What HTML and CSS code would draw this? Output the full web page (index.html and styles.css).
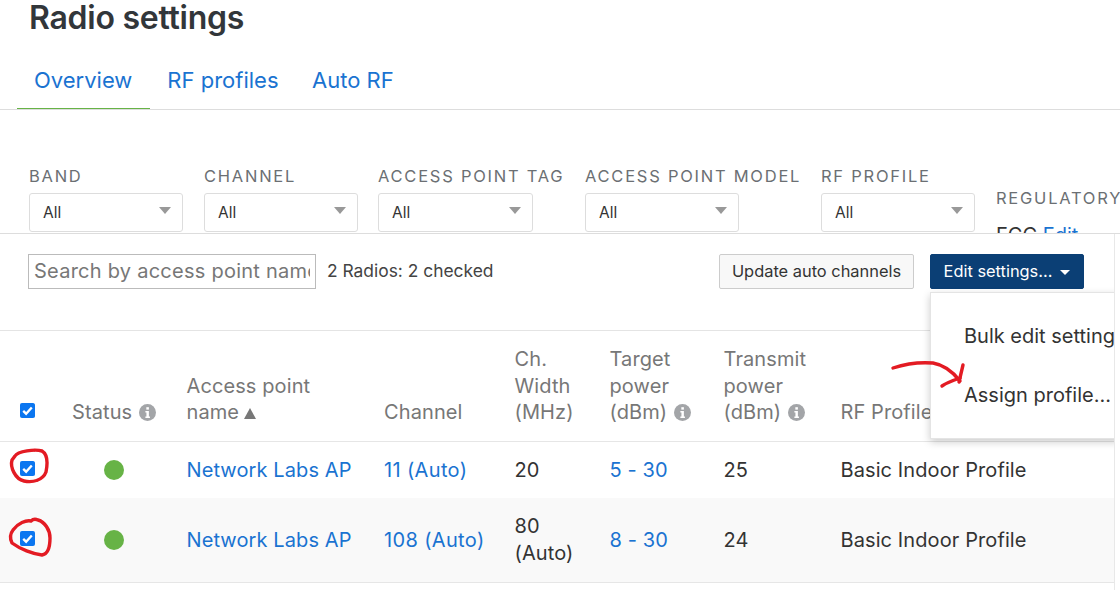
FILE: index.html
```html
<!DOCTYPE html>
<html lang="en">
<head>
<meta charset="utf-8">
<title>Radio settings</title>
<link rel="stylesheet" href="styles.css">
</head>
<body>
<div class="page">
  <h1 class="title">Radio settings</h1>
  <nav class="tabs">
    <a class="tab active">Overview</a>
    <a class="tab">RF profiles</a>
    <a class="tab">Auto RF</a>
  </nav>
  <section class="filters">
    <div class="filter f1"><label>BAND</label><div class="select">All<i></i></div></div>
    <div class="filter f2"><label>CHANNEL</label><div class="select">All<i></i></div></div>
    <div class="filter f3"><label>ACCESS POINT TAG</label><div class="select">All<i></i></div></div>
    <div class="filter f4"><label>ACCESS POINT MODEL</label><div class="select">All<i></i></div></div>
    <div class="filter f5"><label>RF PROFILE</label><div class="select">All<i></i></div></div>
    <div class="regulatory"><label>REGULATORY DOMAIN</label><p>FCC <a>Edit</a></p></div>
  </section>
  <section class="toolbar">
    <input class="search" type="text" placeholder="Search by access point name">
    <span class="count">2 Radios: 2 checked</span>
    <button class="btn">Update auto channels</button>
    <button class="btn primary">Edit settings...<i></i></button>
  </section>
  <table class="radios">
    <thead>
      <tr>
        <th class="c-check"><span class="check"><svg viewBox="0 0 14 14"><path d="M3 7.4l2.7 2.6L11 4.2"/></svg></span></th>
        <th class="c-status">Status <svg class="info" viewBox="0 0 16 16"><circle cx="8" cy="8" r="8"/><rect x="6.9" y="3" width="2.4" height="2.3"/><path d="M6 6.6h3.3v5.2h1v1.4H6v-1.4h1V8H6z"/></svg></th>
        <th class="c-name">Access point name<span class="sort"></span></th>
        <th class="c-channel">Channel</th>
        <th class="c-width">Ch. Width (MHz)</th>
        <th class="c-target">Target power (dBm) <svg class="info" viewBox="0 0 16 16"><circle cx="8" cy="8" r="8"/><rect x="6.9" y="3" width="2.4" height="2.3"/><path d="M6 6.6h3.3v5.2h1v1.4H6v-1.4h1V8H6z"/></svg></th>
        <th class="c-power">Transmit power (dBm) <svg class="info" viewBox="0 0 16 16"><circle cx="8" cy="8" r="8"/><rect x="6.9" y="3" width="2.4" height="2.3"/><path d="M6 6.6h3.3v5.2h1v1.4H6v-1.4h1V8H6z"/></svg></th>
        <th class="c-profile">RF Profile</th>
      </tr>
    </thead>
    <tbody>
      <tr class="row-a">
        <td class="c-check"><span class="check"><svg viewBox="0 0 14 14"><path d="M3 7.4l2.7 2.6L11 4.2"/></svg></span></td>
        <td class="c-status"><span class="dot"></span></td>
        <td><a>Network Labs AP</a></td>
        <td class="c-channel"><a>11 (Auto)</a></td>
        <td>20</td>
        <td><a>5 - 30</a></td>
        <td>25</td>
        <td>Basic Indoor Profile</td>
      </tr>
      <tr class="row-b">
        <td class="c-check"><span class="check"><svg viewBox="0 0 14 14"><path d="M3 7.4l2.7 2.6L11 4.2"/></svg></span></td>
        <td class="c-status"><span class="dot"></span></td>
        <td><a>Network Labs AP</a></td>
        <td class="c-channel"><a>108 (Auto)</a></td>
        <td>80 (Auto)</td>
        <td><a>8 - 30</a></td>
        <td>24</td>
        <td>Basic Indoor Profile</td>
      </tr>
    </tbody>
  </table>
  <div class="menu">
    <div class="menu-item">Bulk edit settings...</div>
    <div class="menu-item">Assign profile...</div>
  </div>
  <div class="edge"></div>
  <svg class="ink" viewBox="0 0 1120 590">
    <path d="M893 368C905 364 920 362 933 363C945 365 953 372 960 381"/>
    <path d="M963 365L959 382"/>
    <path d="M942 386C948 382 954 380 960 378"/>
    <path d="M15 456C18 451 35 449 42 451C47 454 48 462 46 472C43 480 33 483 24 481C15 479 10 467 12 460Z"/>
    <path d="M13 530C18 523 26 520 31 521C33 519 36 519 38 520C45 522 50 530 50 538C50 547 48 554 42 555C33 554 20 549 12 543C10 539 10 534 13 530Z"/>
  </svg>
</div>
</body>
</html>
```
FILE: styles.css
```css
* { box-sizing: border-box; }
html, body { margin: 0; padding: 0; background: #fff; }
body { font-family: Inter, "Liberation Sans", sans-serif; color: #333; font-size: 20px; }
.page { position: relative; width: 1120px; height: 590px; overflow: hidden; }
.title { margin: 0; padding: 0 0 0 29px; height: 50px; font-size: 32px; line-height: 36px; font-weight: 600; color: #32363a; letter-spacing: -0.25px; }
.tabs { display: flex; height: 60px; padding-left: 17px; border-bottom: 1px solid #ddd; }
.tab { padding: 16px 17px 0; height: 59px; font-size: 22px; line-height: 28px; color: #1a73d1; }
.tab.active { border-bottom: 1px solid #67b346; padding-right: 18px; }
.tab:last-child { padding-left: 16.5px; }
.filters { display: flex; align-items: flex-end; height: 124px; padding: 0 0 1px 29px; border-bottom: 1px solid #ddd; overflow: hidden; white-space: nowrap; }
.filter label, .regulatory label { display: block; font-size: 16.5px; line-height: 20px; letter-spacing: 1.75px; color: #6b6f73; margin-bottom: 7px; }
.filter { flex: none; }
.f1 { width: 175px; }
.f2 { width: 174px; }
.f3 { width: 207px; }
.f4 { width: 236px; }
.f5 { width: 175px; }
.select { position: relative; width: 154px; height: 39px; padding: 9px 13px; border: 1px solid #ddd; border-radius: 3px; font-size: 15.5px; line-height: 20px; color: #333; }
.f3 .select { width: 155px; }
.select i { position: absolute; right: 11px; top: 13px; border-left: 6.5px solid transparent; border-right: 6.5px solid transparent; border-top: 7px solid #999; }
.regulatory { align-self: flex-start; padding-top: 78px; }
.regulatory label { margin-bottom: 16px; }
.regulatory p { margin: 0; font-size: 20px; line-height: 22px; color: #333; }
.regulatory a { color: #1a73d1; }
.toolbar { display: flex; align-items: flex-start; height: 97px; padding: 20px 0 0 28px; border-bottom: 1px solid #e4e4e4; }
.search { width: 288px; height: 35px; padding: 0 5px 2px; border: 1px solid #bbb; font: 20px Inter, sans-serif; letter-spacing: 0.25px; }
.search::placeholder { color: #777; opacity: 1; }
.count { margin-left: 11px; margin-right: 225px; font-size: 17.4px; line-height: 34px; color: #444; width: 167px; white-space: nowrap; }
.btn { height: 35px; padding: 0 0 1px; width: 195px; border: 1px solid #ccc; border-radius: 2px; background: #f8f8f8; color: #333; font: 16.4px Inter, sans-serif; }
.btn.primary { width: 154px; margin-left: 16px; background: #0b3f75; border-color: #0b3f75; color: #fff; }
.btn.primary i { display: inline-block; margin-left: 8px; vertical-align: 2px; border-left: 5px solid transparent; border-right: 5px solid transparent; border-top: 5px solid #fff; }
.radios { table-layout: fixed; border-collapse: collapse; width: 1120px; font-size: 20px; line-height: 27px; letter-spacing: 0.1px; }
th { text-align: left; vertical-align: bottom; font-weight: 400; line-height: 26.5px; color: #777; padding: 14px 12px 15px 0; height: 110px; }
th.c-name { padding-right: 40px; }
td { height: 57px; padding: 1px 12px 0 0; color: #333; }
td a { color: #1a73d1; }
td.c-channel a { letter-spacing: 0.35px; }
.radios thead tr, .radios tbody tr { border-bottom: 1px solid #e6e6e6; }
.radios tr.row-a { border-bottom: 0; height: 57px; }
.radios tr.row-b { background: #f9f9f9; height: 84px; }
.radios tr.row-b td { height: 84px; }
.radios th:nth-child(1), .radios td:nth-child(1) { width: 72px; padding-left: 20px; }
.radios th:nth-child(2), .radios td:nth-child(2) { width: 114.5px; }
.radios th:nth-child(3), .radios td:nth-child(3) { width: 197.5px; }
.radios th:nth-child(4), .radios td:nth-child(4) { width: 130.5px; }
.radios th:nth-child(5), .radios td:nth-child(5) { width: 95px; }
.radios th:nth-child(6), .radios td:nth-child(6) { width: 114px; }
.radios th:nth-child(7), .radios td:nth-child(7) { width: 117px; }
.radios td.c-status { padding-left: 32px; }
.check { display: block; width: 15px; height: 15px; background: #0b76f0; border-radius: 2px; }
th .check { margin-bottom: 8px; }
td .check { margin-top: -3px; }
.check svg { display: block; width: 15px; height: 15px; fill: none; stroke: #fff; stroke-width: 2.2; }
.dot { display: block; width: 20px; height: 20px; border-radius: 50%; background: #67b346; }
.info { display: inline-block; width: 17px; height: 17px; vertical-align: -2px; fill: #a3a5a8; margin-left: 1px; }
.info rect, .info path { fill: #fff; }
.sort { display: inline-block; margin-left: 5px; border-left: 6px solid transparent; border-right: 6px solid transparent; border-bottom: 11px solid #777; }
.menu { position: absolute; left: 930px; top: 292px; width: 190px; height: 147px; padding: 24px 0 0 33px; background: #fff; border: 1px solid #e4e4e4; box-shadow: 0 3px 8px rgba(0,0,0,.2); overflow: hidden; white-space: nowrap; font-size: 20px; }
.menu-item { height: 59px; line-height: 38px; color: #333; }
.edge { position: absolute; left: 1114px; top: 234px; width: 6px; height: 356px; background: #fff; border-left: 1px solid #e8e8e8; }
.ink { position: absolute; left: 0; top: 0; width: 1120px; height: 590px; fill: none; stroke: #e31b23; stroke-width: 3.4; stroke-linecap: round; stroke-linejoin: round; pointer-events: none; }
```
